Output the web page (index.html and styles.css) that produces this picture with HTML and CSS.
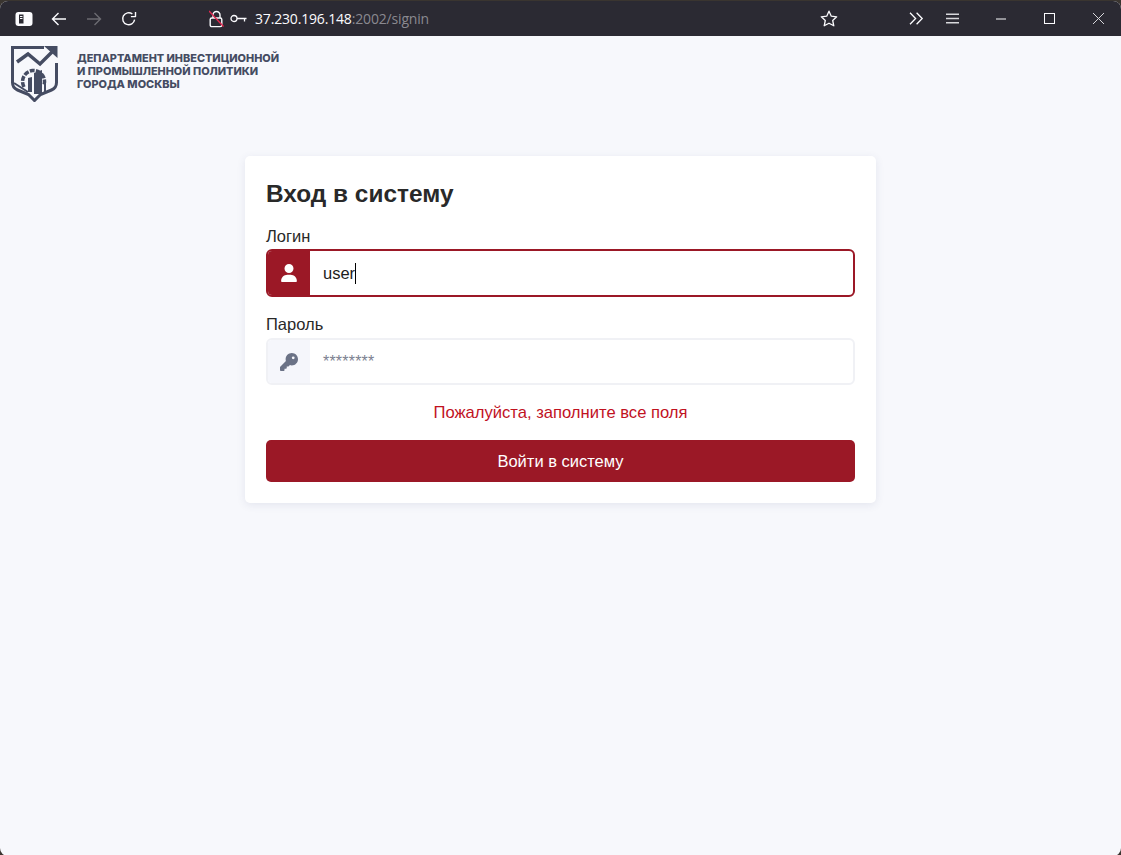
FILE: index.html
```html
<!DOCTYPE html>
<html lang="ru">
<head>
<meta charset="utf-8">
<title>Вход в систему</title>
<link rel="stylesheet" href="styles.css">
</head>
<body>
<div class="window">
  <div class="toolbar">
    <div class="nav">
      <svg class="i tabs" width="18" height="14" viewBox="0 0 18 14"><rect x="0.5" y="0" width="17" height="14" rx="3" fill="#fbfbfe"/><rect x="4" y="2.500" width="4.500" height="9" fill="#2b2a33"/><path d="M5 4.500h2.500M5 6.500h2.500" stroke="#fbfbfe" stroke-width="1"/></svg>
      <svg class="i back" width="16" height="14" viewBox="0 0 16 14" fill="none" stroke="#fbfbfe" stroke-width="1.4"><path d="M15 7H1.500M7.500 1 1.500 7l6 6"/></svg>
      <svg class="i fwd" width="16" height="14" viewBox="0 0 16 14" fill="none" stroke="#6c6b72" stroke-width="1.4"><path d="M1 7h13.500M8.500 1l6 6-6 6"/></svg>
      <svg class="i reload" width="16" height="16" viewBox="0 0 16 16" fill="none" stroke="#fbfbfe" stroke-width="1.4"><path d="M13.600 8.600A6 6 0 1 1 11.400 3"/><path d="M14.500 1v4.600H9.900" stroke-linejoin="round"/></svg>
    </div>
    <div class="address">
      <svg class="lock" width="15" height="18" viewBox="0 0 15 18" fill="none"><path d="M4 8V5a3.500 3.500 0 0 1 7 0v3" stroke="#fbfbfe" stroke-width="1.4"/><rect x="1.200" y="8" width="11.600" height="8.600" rx="1.600" stroke="#fbfbfe" stroke-width="1.4"/><path d="M0 1l14.500 15.500" stroke="#e22850" stroke-width="1.4"/></svg>
      <svg class="key" width="17" height="9" viewBox="0 0 17 9" fill="none" stroke="#fbfbfe" stroke-width="1.3"><circle cx="4" cy="4.500" r="3"/><path d="M7 4.500h9.500M14.500 4.500v3"/></svg>
      <span class="url">37.230.196.148<span class="url-dim">:2002/signin</span></span>
    </div>
    <div class="tools">
      <svg class="star" width="18" height="17" viewBox="0 0 18 17" fill="none" stroke="#fbfbfe" stroke-width="1.3" stroke-linejoin="round"><path d="M9 1.200l2.300 5 5.400.6-4 3.700 1.100 5.300L9 13.200l-4.800 2.600 1.100-5.300-4-3.700 5.400-.6z"/></svg>
      <svg class="more" width="15" height="13" viewBox="0 0 15 13" fill="none" stroke="#fbfbfe" stroke-width="1.3"><path d="M1 .8l5.600 5.700L1 12.200M7.600.8l5.600 5.700-5.600 5.700"/></svg>
      <svg class="menu" width="13" height="11" viewBox="0 0 13 11" fill="none" stroke="#d8d8dc" stroke-width="1.4"><path d="M0 1.300h13M0 5.500h13M0 9.700h13"/></svg>
      <svg class="min" width="10" height="2" viewBox="0 0 10 2"><path d="M0 1h10" stroke="#fbfbfe"/></svg>
      <svg class="max" width="11" height="11" viewBox="0 0 11 11" fill="none"><rect x="0.500" y="0.500" width="10" height="10" stroke="#fbfbfe"/></svg>
      <svg class="close" width="11" height="11" viewBox="0 0 11 11" fill="none" stroke="#d8d8dc"><path d="M0 0l11 11M11 0L0 11"/></svg>
    </div>
  </div>
  <div class="page">
    <header class="brand">
      <svg class="emblem" width="47" height="56" viewBox="0 0 47 56" fill="none">
        <path d="M33 1.500H1.500v35c0 4 1.500 6 5 7.500l11 4.500 6 6 6-6 11-4.500c3.500-1.500 5-3.500 5-7.500V17" stroke="#454c62" stroke-width="3"/>
        <path d="M6 16l11-8 12 10L41 6" stroke="#454c62" stroke-width="3.500"/>
        <path d="M33 0h13.500v12z" fill="#454c62"/>
        <path d="M13 41A11 11 0 1 1 33 39" stroke="#454c62" stroke-width="3.500" stroke-dasharray="5 1.300"/>
        <path d="M17 46V32l4-1v15zM23 48V27l8-3v24zM33 46V36l2 1v9z" fill="#454c62"/>
        <path d="M3 37l14 9" stroke="#454c62" stroke-width="2"/>
      </svg>
      <div class="brand-name">ДЕПАРТАМЕНТ ИНВЕСТИЦИОННОЙ<br>И ПРОМЫШЛЕННОЙ ПОЛИТИКИ<br>ГОРОДА МОСКВЫ</div>
    </header>
    <main class="card">
      <h1 class="title">Вход в систему</h1>
      <div class="field">
        <label class="label">Логин</label>
        <div class="group group-active">
          <span class="addon addon-active">
            <svg width="16" height="18" viewBox="0 0 448 512" fill="#fff"><path d="M224 256a128 128 0 1 0 0-256 128 128 0 1 0 0 256zm-45.700 48C79.800 304 0 383.800 0 482.300 0 498.700 13.300 512 29.700 512h388.600c16.400 0 29.700-13.300 29.700-29.700C448 383.800 368.200 304 269.700 304z"/></svg>
          </span>
          <span class="value">user<span class="caret"></span></span>
        </div>
      </div>
      <div class="field field-second">
        <label class="label">Пароль</label>
        <div class="group">
          <span class="addon">
            <svg width="18" height="18" viewBox="0 0 512 512" fill="#6b7286"><path d="M336 352c97.200 0 176-78.800 176-176S433.200 0 336 0 160 78.800 160 176c0 18.700 2.900 36.800 8.300 53.700L7 391c-4.500 4.500-7 10.600-7 17v80c0 13.300 10.700 24 24 24h80c13.300 0 24-10.700 24-24v-40h40c13.300 0 24-10.700 24-24v-40h40c6.400 0 12.500-2.500 17-7l33.300-33.300c16.900 5.400 35 8.300 53.700 8.300zM376 96a40 40 0 1 1 0 80 40 40 0 1 1 0-80z"/></svg>
          </span>
          <span class="placeholder">********</span>
        </div>
      </div>
      <p class="error">Пожалуйста, заполните все поля</p>
      <button class="submit" type="button">Войти в систему</button>
    </main>
  </div>
</div>
</body>
</html>
```
FILE: styles.css
```css
* { box-sizing: border-box; }
html, body { margin: 0; height: 100%; }
body {
  background: #3a3530;
  font-family: "Liberation Sans", Arial, sans-serif;
  overflow: hidden;
}
.window {
  height: 855px;
  margin-top: 1px;
  display: flex;
  flex-direction: column;
  border-radius: 8px;
  overflow: hidden;
  background: #f7f8fc;
}
.toolbar {
  height: 35px;
  flex: none;
  background: #2b2a33;
  display: flex;
  align-items: center;
}
.nav { display: flex; align-items: center; padding-left: 15px; width: 208px; }
.nav .back { margin-left: 18px; }
.nav .fwd { margin-left: 19px; }
.nav .reload { margin-left: 19px; }
.address { display: flex; align-items: center; flex: 1; }
.lock { margin-left: 1px; }
.key { margin-left: 6px; }
.url {
  margin-left: 8px;
  font: 14px "Open Sans", sans-serif;
  color: #fbfbfe;
  letter-spacing: -0.17px;
}
.url-dim { color: #8a8990; }
.tools { display: flex; align-items: center; padding-right: 17px; }
.more { margin-left: 71px; }
.menu { margin-left: 22px; }
.min { margin-left: 37px; }
.max { margin-left: 38px; }
.close { margin-left: 38px; }
.page { flex: 1; display: flex; flex-direction: column; align-items: center; }
.brand {
  align-self: flex-start;
  display: flex;
  align-items: flex-start;
  padding: 10px 0 0 11px;
  height: 120px;
}
.brand-name {
  margin: 6px 0 0 19px;
  font: 800 10.9px/13px Inter, sans-serif;
  color: #454c62;
}
.card {
  width: 631px;
  height: 347px;
  background: #fff;
  border-radius: 5px;
  box-shadow: 0 2px 8px rgba(60, 70, 120, 0.1);
  padding: 21px;
}
.title {
  margin: 0;
  font-size: 24.4px;
  line-height: 34px;
  font-weight: 700;
  color: #292929;
}
.field { margin-top: 15px; }
.field-second { margin-top: 17px; }
.label {
  display: block;
  font-size: 16.5px;
  line-height: 20px;
  margin-bottom: 3px;
  color: #292929;
}
.field-second .label { margin-bottom: 4px; }
.group {
  height: 47px;
  display: flex;
  align-items: center;
  border: 2px solid #f0f1f5;
  border-radius: 6px;
  overflow: hidden;
  background: #fff;
}
.group-active { height: 48px; border-color: #9b1826; }
.addon {
  width: 42px;
  height: 100%;
  flex: none;
  display: flex;
  align-items: center;
  justify-content: center;
  background: #f5f6fb;
}
.addon-active { background: #9b1826; }
.value, .placeholder { margin-left: 13px; font-size: 16.5px; }
.value { color: #1d1d1d; display: flex; align-items: center; }
.caret { width: 1px; height: 21px; background: #000; }
.placeholder { color: #7b8090; font-size: 16px; letter-spacing: 0.2px; }
.error {
  margin: 18px 0 0;
  text-align: center;
  font-size: 16.6px;
  line-height: 20px;
  color: #c1121f;
}
.submit {
  display: block;
  width: 100%;
  height: 42px;
  margin-top: 17px;
  border: 0;
  border-radius: 5px;
  background: #9b1826;
  color: #fff;
  font: 16.5px "Liberation Sans", Arial, sans-serif;
}
```
